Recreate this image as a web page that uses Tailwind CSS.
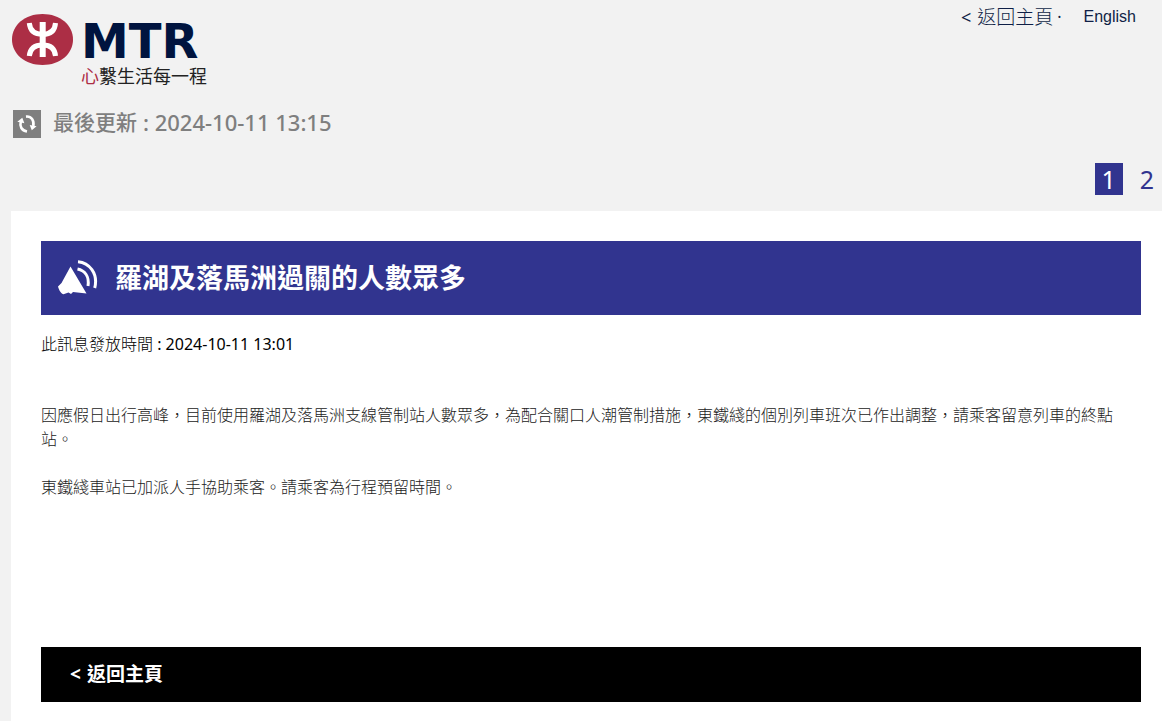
<!DOCTYPE html>
<html lang="zh-Hant-HK">
<head>
<meta charset="utf-8">
<meta name="viewport" content="width=device-width, initial-scale=1">
<title>MTR</title>
<script src="https://cdn.jsdelivr.net/npm/@tailwindcss/browser@4"></script>
</head>
<body class="flex min-h-screen flex-col bg-[#f2f2f2] font-['Noto_Sans','Noto_Sans_CJK_TC',sans-serif] text-black">
<header class="flex flex-col">
  <div class="flex items-start justify-between pl-3 pr-[26px]">
    <a href="#" class="flex items-start gap-2 pt-3.5" aria-label="MTR">
      <svg class="h-[51px] w-[61px]" viewBox="12 14 61 51" aria-hidden="true">
        <path d="M42.500 14C60 14 73 25 73 39.500S60 65 42.500 65 12 54 12 39.500 25 14 42.500 14Z" fill="#ac2e45"/>
        <path d="M42.700 22V57" stroke="#fff" stroke-width="6"/>
        <path d="M29.300 23C30 31 35 34.300 42.700 34.300S54.900 31 55.500 23M29.300 56C30 48.500 35 45 42.700 45S54.900 48.500 55.500 56" fill="none" stroke="#fff" stroke-width="5"/>
      </svg>
      <span class="flex flex-col pt-1 text-[#00143f]">
        <span class="font-['DejaVu_Sans',sans-serif] text-[48px] leading-[46px] font-bold">MTR</span>
        <span class="text-[18px] leading-[24px] text-[#222]"><span class="text-[#ac2e45]">心</span>繫生活每一程</span>
      </span>
    </a>
    <nav class="flex items-center pt-1 leading-[26px] text-[#0f1f46]">
      <a href="#" class="flex items-center gap-1.5"><span class="text-[18px]">&lt;</span><span class="text-[19px] font-light">返回主頁</span></a>
      <span class="pl-1 text-[16px]">·</span>
      <a href="#" class="pl-[22px] font-['Liberation_Sans',sans-serif] text-[16px]">English</a>
    </nav>
  </div>
  <div class="flex items-start gap-3 px-[13px] pt-[22px] text-[#7f7f7f]">
    <button type="button" class="flex size-7 items-center justify-center bg-[#7f7f7f]" aria-label="更新">
      <svg class="size-7" viewBox="0 0 28 28" fill="none" stroke="#fff" stroke-width="2.600" aria-hidden="true">
        <path d="M13 6.600C18.500 6 21.300 10.500 20.300 16"/>
        <path d="M14 21.500C8.500 20.500 6.500 16.500 7.800 11.500"/>
        <path d="M16.700 15 23.600 16.200 18.800 20.200ZM4.300 11.800 9.300 7.800 11.400 13.300Z" fill="#fff" stroke="none"/>
      </svg>
    </button>
    <p class="flex items-center gap-1.5 text-[22px] leading-[24px] font-medium"><span class="text-[21px]">最後更新</span><span>: 2024-10-11 13:15</span></p>
  </div>
  <nav class="flex justify-end gap-[13px] pt-[25px] pr-1 pb-4 text-[25px] leading-[32px] text-[#31348f]">
    <a href="#" aria-current="page" class="w-7 bg-[#31348f] text-center text-white">1</a>
    <a href="#" class="px-1">2</a>
  </nav>
</header>
<main class="ml-[11px] flex grow flex-col bg-white pt-[30px] pr-[21px] pb-[19px] pl-[30px]">
  <h1 class="flex min-h-[74px] items-center gap-4 bg-[#31348f] pl-4 text-[27px] leading-[34px] font-bold text-white">
    <svg class="h-[38px] w-[42px]" viewBox="0 0 42 38" aria-hidden="true">
      <path d="M13.500 7.500 29.500 34.500 16 33 14 35 11.500 33.500 6.500 35.200C4.500 35 2 31.500 1 27.500L4.500 24Z" fill="#fff"/>
      <path d="M20.500 10C27.500 11.500 32.500 17 31 27" fill="none" stroke="#fff" stroke-width="3"/>
      <path d="M21 2.700C32 3.500 41.500 14.500 37.700 29" fill="none" stroke="#fff" stroke-width="3"/>
    </svg>
    <span>羅湖及落馬洲過關的人數眾多</span>
  </h1>
  <p class="pt-4 text-[16px] leading-[26px]"><span class="font-light">此訊息發放時間</span> : 2024-10-11 13:01</p>
  <div class="flex flex-col gap-6 pt-[46px] text-[16px] leading-[24px] font-light text-[#222]">
    <p>因應假日出行高峰，目前使用羅湖及落馬洲支線管制站人數眾多，為配合關口人潮管制措施，東鐵綫的個別列車班次已作出調整，請乘客留意列車的終點站。</p>
    <p>東鐵綫車站已加派人手協助乘客。請乘客為行程預留時間。</p>
  </div>
  <a href="#" class="mt-auto flex min-h-[55px] items-center gap-1.5 bg-black px-[29px] text-[19px] leading-[27px] font-bold text-white"><span>&lt;</span><span>返回主頁</span></a>
</main>
</body>
</html>
